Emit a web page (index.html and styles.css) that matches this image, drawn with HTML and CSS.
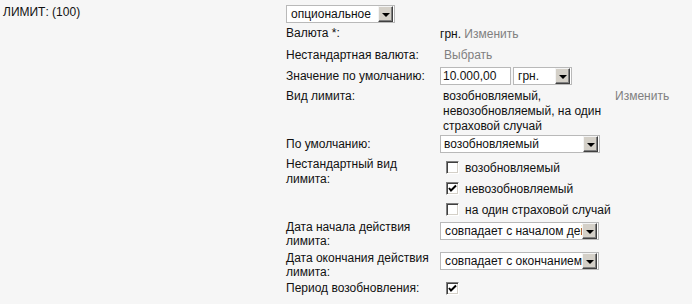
FILE: index.html
```html
<!DOCTYPE html>
<html>
<head>
<meta charset="utf-8">
<link rel="stylesheet" href="styles.css">
</head>
<body>
<div class="page">
  <div class="side">ЛИМИТ: (100)</div>
  <div class="form">
    <div class="row r-top">
      <div class="sel w-opt"><span class="sel-text">опциональное</span><span class="sel-btn"><span class="tri"></span></span></div>
    </div>
    <div class="row r-cur">
      <div class="lbl">Валюта *:</div>
      <div class="val">грн. <span class="link">Изменить</span></div>
    </div>
    <div class="row r-ncur">
      <div class="lbl">Нестандартная валюта:</div>
      <div class="val pad4"><span class="link">Выбрать</span></div>
    </div>
    <div class="row r-def">
      <div class="lbl">Значение по умолчанию:</div>
      <div class="val inline">
        <div class="inp">10.000,00</div>
        <div class="sel w-cur"><span class="sel-text">грн.</span><span class="sel-btn"><span class="tri"></span></span></div>
      </div>
    </div>
    <div class="row r-kind">
      <div class="lbl">Вид лимита:</div>
      <div class="val kind-text">возобновляемый, невозобновляемый, на один страховой случай</div>
      <div class="act"><span class="link">Изменить</span></div>
    </div>
    <div class="row r-bydef">
      <div class="lbl">По умолчанию:</div>
      <div class="val">
        <div class="sel w-long"><span class="sel-text">возобновляемый</span><span class="sel-btn"><span class="tri"></span></span></div>
      </div>
    </div>
    <div class="row r-nkind">
      <div class="lbl">Нестандартный вид лимита:</div>
      <div class="val checks">
        <div class="chk-item"><span class="chk"></span><span>возобновляемый</span></div>
        <div class="chk-item"><span class="chk"><svg viewBox="0 0 9 9" width="9" height="9"><path d="M1 4 L3 6.5 L8 1.5" fill="none" stroke="#000" stroke-width="2"/></svg></span><span>невозобновляемый</span></div>
        <div class="chk-item"><span class="chk"></span><span>на один страховой случай</span></div>
      </div>
    </div>
    <div class="row r-date">
      <div class="lbl lbl-date">Дата начала действия лимита:</div>
      <div class="val">
        <div class="sel w-date"><span class="sel-text">совпадает с началом действия договора</span><span class="sel-btn"><span class="tri"></span></span></div>
      </div>
    </div>
    <div class="row r-date2">
      <div class="lbl lbl-date">Дата окончания действия лимита:</div>
      <div class="val">
        <div class="sel w-date"><span class="sel-text">совпадает с окончанием действия договора</span><span class="sel-btn"><span class="tri"></span></span></div>
      </div>
    </div>
    <div class="row r-period">
      <div class="lbl">Период возобновления:</div>
      <div class="val">
        <span class="chk chk-solo"><svg viewBox="0 0 9 9" width="9" height="9"><path d="M1 4 L3 6.5 L8 1.5" fill="none" stroke="#000" stroke-width="2"/></svg></span>
      </div>
    </div>
  </div>
</div>
</body>
</html>
```

FILE: styles.css
```css
body {
  margin: 0;
  background: #f6f6f6;
  font: 12px "Liberation Sans", Arial, sans-serif;
  color: #111;
}
.page {
  display: flex;
}
.side {
  width: 280px;
  padding: 5px 0 0 3px;
  line-height: 14px;
}
.form {
  display: flex;
  flex-direction: column;
  padding-top: 5px;
  padding-left: 3px;
}
.row {
  display: flex;
}
.lbl {
  width: 154px;
  line-height: 15px;
  flex: none;
}
.val {
  flex: none;
}
.link {
  color: #808080;
}
.pad4 {
  padding-left: 4px;
}

/* rows */
.r-top { height: 18px; }
.r-cur { height: 21px; align-items: center; }
.r-ncur { height: 22px; align-items: center; }
.r-def { height: 20px; align-items: center; }
.r-kind { height: 48px; padding-top: 3px; box-sizing: border-box; line-height: 15px; }
.r-bydef { height: 20px; align-items: center; }
.r-nkind { height: 66px; padding-top: 3px; box-sizing: border-box; }
.r-date { height: 30px; }
.r-date2 { height: 30px; padding-top: 1px; box-sizing: border-box; }
.r-period { height: 20px; }

.r-date .sel, .r-date2 .sel { margin-top: 2px; }
.r-date2 .sel { margin-top: 1px; }
.lbl-date { line-height: 14px; }
.r-period .lbl { line-height: 16px; }

.inline {
  display: flex;
  gap: 2px;
}
.kind-text {
  width: 172px;
  padding-left: 3px;
  box-sizing: border-box;
}
.act {
  padding-left: 3px;
}

/* select look-alike */
.sel {
  display: flex;
  align-items: stretch;
  height: 18px;
  box-sizing: border-box;
  border: 1px solid #b9b9b9;
  background: #fff;
  overflow: hidden;
}
.sel-text {
  flex: 1;
  min-width: 0;
  padding-left: 4px;
  line-height: 16px;
  white-space: nowrap;
  overflow: hidden;
}
.sel-btn {
  flex: none;
  width: 15px;
  margin: 0 1px 0 0;
  box-sizing: border-box;
  background: #d4d0c8;
  border: 1px solid;
  border-color: #f4f4f4 #404040 #404040 #f4f4f4;
  box-shadow: inset -1px -1px 0 #808080;
  display: flex;
  align-items: center;
  justify-content: center;
}
.tri {
  width: 0;
  height: 0;
  border-left: 4px solid transparent;
  border-right: 4px solid transparent;
  border-top: 4px solid #000;
  margin-top: 1px;
}
.w-opt { width: 109px; }
.w-cur { width: 59px; }
.w-long { width: 160px; }
.w-date { width: 159px; }
.w-long .sel-text { padding-left: 3px; }

.inp {
  width: 71px;
  height: 18px;
  box-sizing: border-box;
  border: 1px solid #b9b9b9;
  background: #fff;
  padding-left: 2px;
  line-height: 16px;
}

/* checkboxes */
.checks {
  display: flex;
  flex-direction: column;
}
.chk-item {
  height: 21px;
  display: flex;
  align-items: center;
  gap: 6px;
  padding-left: 6px;
}
.chk {
  flex: none;
  width: 13px;
  height: 13px;
  box-sizing: border-box;
  background: #fff;
  border: 1px solid;
  border-color: #808080 #ffffff #ffffff #808080;
  box-shadow: inset 1px 1px 0 #404040, inset -1px -1px 0 #d4d0c8;
  display: flex;
  align-items: center;
  justify-content: center;
}
.chk-solo {
  margin: 2px 0 0 6px;
}
```
